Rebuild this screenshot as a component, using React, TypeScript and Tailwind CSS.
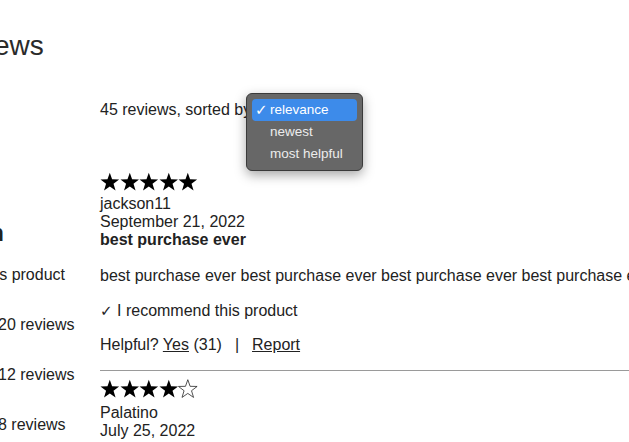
import React from 'react';

const STAR = '10,0.5 12.35,7.26 19.51,7.41 13.8,11.74 15.88,18.59 10,14.5 4.12,18.59 6.2,11.74 0.49,7.41 7.65,7.26';

function Star({ filled }: { filled: boolean }) {
  return (
    <svg width="19.6" height="20" viewBox="0 0 20 20" className="block">
      {filled ? (
        <polygon points={STAR} fill="#000" />
      ) : (
        <polygon points={STAR} fill="none" stroke="#222" strokeWidth="0.8" strokeLinejoin="miter" />
      )}
    </svg>
  );
}

function Stars({ count }: { count: number }) {
  return (
    <div className="flex h-[20px]">
      {[0, 1, 2, 3, 4].map((i) => (
        <Star key={i} filled={i < count} />
      ))}
    </div>
  );
}

function SortPopup() {
  const options = ['relevance', 'newest', 'most helpful'];
  return (
    <div className="absolute left-[146px] top-[-8px] w-[117px] h-[78px] rounded-[6px] border border-[#3a3a3a] bg-[#676767] shadow-[0_4px_12px_rgba(0,0,0,0.35)] px-[5px] pt-[5px] text-[13.5px] leading-[22px] font-['Liberation_Sans',sans-serif]">
      {options.map((o, i) => (
        <div
          key={o}
          className={
            i === 0
              ? 'relative h-[22px] rounded-[4px] bg-[#3d8bea] pl-[18px] text-white'
              : 'relative h-[22px] pl-[18px] text-[#ececec]'
          }
        >
          {i === 0 && <span className="absolute left-[3px] top-0 font-['DejaVu_Sans',sans-serif] text-[15px]">✓</span>}
          {o}
        </div>
      ))}
    </div>
  );
}

export default function App() {
  return (
    <div className="relative w-[629px] h-[442px] overflow-hidden bg-white text-[#222] font-['Liberation_Sans',Arial,sans-serif]">
      <div className="-ml-[62px] w-[1000px]">
        {/* Heading */}
        <h1 className="pt-[30px] text-[28px] leading-[32px] font-normal text-[#2a2a2a]">Reviews</h1>

        <div className="flex">
          {/* Summary column */}
          <div className="w-[162px] shrink-0 text-[16px] leading-[18px]">
            <div className="mt-[155px] flex w-[66px] justify-end whitespace-nowrap text-[24px] leading-[32px] font-bold">
              Recommendation
            </div>
            <div className="mt-[17px] flex w-[127px] justify-end whitespace-nowrap">
              84% recommend this product
            </div>
            <div className="mt-[32px] flex whitespace-nowrap">
              <span className="w-[60px]">5 stars</span>
              <span>20 reviews</span>
            </div>
            <div className="mt-[32px] flex whitespace-nowrap">
              <span className="w-[60px]">4 stars</span>
              <span>12 reviews</span>
            </div>
            <div className="mt-[32px] flex whitespace-nowrap">
              <span className="w-[60px]">3 stars</span>
              <span>8 reviews</span>
            </div>
          </div>

          {/* Review list */}
          <div className="flex-1 text-[16px] leading-[18px]">
            <div className="relative mt-[39px] whitespace-nowrap">
              45 reviews, sorted by{' '}
              <select className="text-[13px]" defaultValue="relevance">
                <option>relevance</option>
                <option>newest</option>
                <option>most helpful</option>
              </select>
              <SortPopup />
            </div>

            <div className="mt-[53px]">
              <Stars count={5} />
            </div>
            <div className="mt-[3px]">
              <div>jackson11</div>
              <div>September 21, 2022</div>
              <div className="font-bold">best purchase ever</div>
            </div>
            <p className="mt-[18px] whitespace-nowrap">
              best purchase ever best purchase ever best purchase ever best purchase ever best purchase ever
            </p>
            <div className="mt-[17px]">
              <span className="font-['DejaVu_Sans',sans-serif] text-[15px] font-bold">✓</span> I recommend this product
            </div>
            <div className="mt-[16px] whitespace-nowrap">
              Helpful? <span className="underline">Yes</span> (31)
              <span className="mx-[13px]">|</span>
              <span className="underline">Report</span>
            </div>
            <div className="mt-[16px] h-px bg-[#9a9a9a]" />

            <div className="mt-[8px]">
              <Stars count={4} />
            </div>
            <div className="mt-[5px]">
              <div>Palatino</div>
              <div>July 25, 2022</div>
            </div>
          </div>
        </div>
      </div>
    </div>
  );
}
